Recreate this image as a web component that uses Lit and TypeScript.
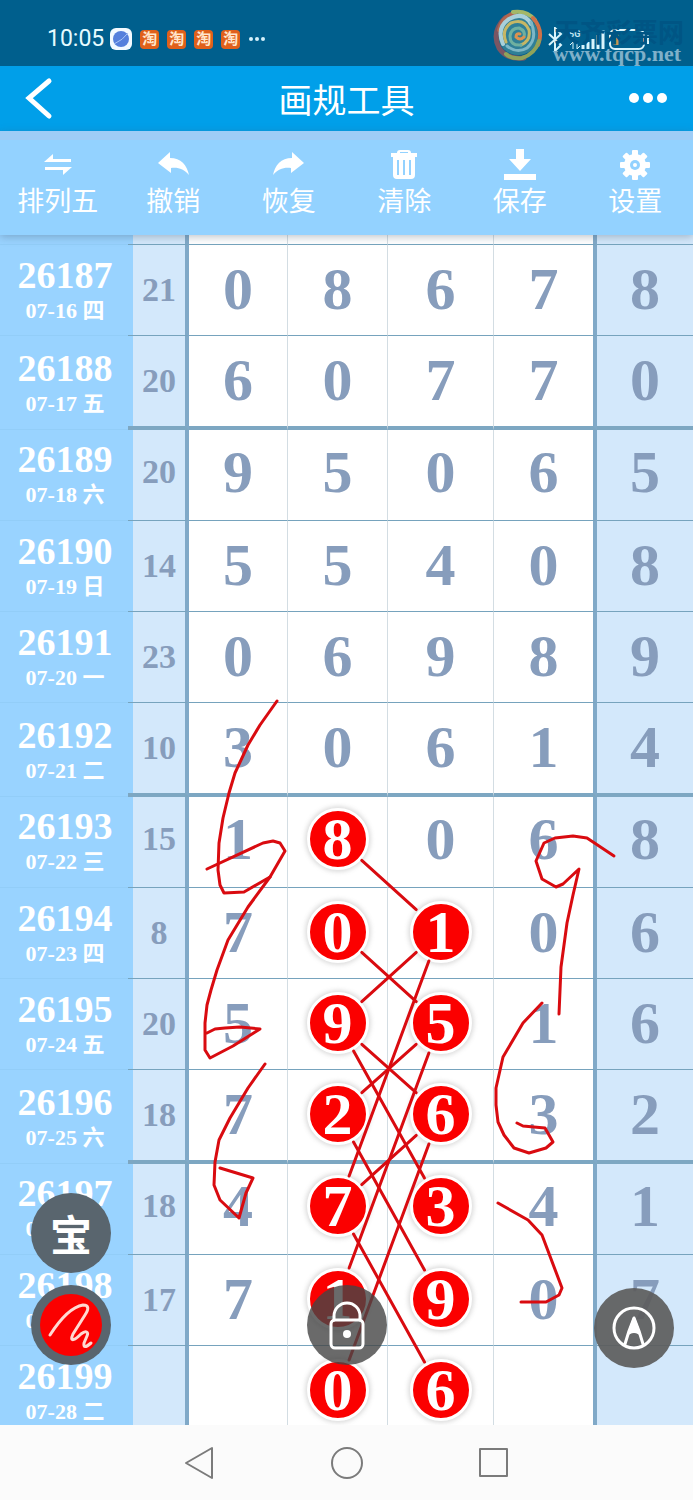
import { html, svg, css, LitElement } from "lit";
import { customElement, property, state } from "lit/decorators.js";
import { classMap } from "lit/directives/class-map.js";

interface Draw {
  issue: string;
  date: string;
  sum: string;
  digits: string[];
  marked?: number[];
  weekEnd?: boolean;
}

const DRAWS: Draw[] = [
  { issue: "26187", date: "07-16 四", sum: "21", digits: ["0", "8", "6", "7", "8"] },
  { issue: "26188", date: "07-17 五", sum: "20", digits: ["6", "0", "7", "7", "0"], weekEnd: true },
  { issue: "26189", date: "07-18 六", sum: "20", digits: ["9", "5", "0", "6", "5"] },
  { issue: "26190", date: "07-19 日", sum: "14", digits: ["5", "5", "4", "0", "8"] },
  { issue: "26191", date: "07-20 一", sum: "23", digits: ["0", "6", "9", "8", "9"] },
  { issue: "26192", date: "07-21 二", sum: "10", digits: ["3", "0", "6", "1", "4"], weekEnd: true },
  { issue: "26193", date: "07-22 三", sum: "15", digits: ["1", "8", "0", "6", "8"], marked: [1] },
  { issue: "26194", date: "07-23 四", sum: "8", digits: ["7", "0", "1", "0", "6"], marked: [1, 2] },
  { issue: "26195", date: "07-24 五", sum: "20", digits: ["5", "9", "5", "1", "6"], marked: [1, 2] },
  { issue: "26196", date: "07-25 六", sum: "18", digits: ["7", "2", "6", "3", "2"], marked: [1, 2], weekEnd: true },
  { issue: "26197", date: "07-26 日", sum: "18", digits: ["4", "7", "3", "4", "1"], marked: [1, 2] },
  { issue: "26198", date: "07-27 一", sum: "17", digits: ["7", "1", "9", "0", "7"], marked: [1, 2] },
  { issue: "26199", date: "07-28 二", sum: "", digits: ["", "0", "6", "", ""], marked: [1, 2] },
];

// Centres of the marked balls: [x, y] pairs joined by the ruler tool
const LINKS = [
  [338, 839, 440, 931],
  [338, 931, 440, 1023],
  [440, 931, 338, 1023],
  [338, 1023, 440, 1114],
  [440, 1023, 338, 1114],
  [338, 1023, 440, 1206],
  [338, 1114, 440, 1298],
  [440, 1114, 338, 1206],
  [338, 1206, 440, 1390],
  [440, 931, 338, 1206],
  [440, 1023, 338, 1298],
  [440, 1114, 338, 1390],
];

const STROKES = [
  "277,701 260,725 248,745 235,773 229,793 223,818 219,843 218,870 220,885 224,893 244,892 270,877",
  "207,869 263,843 273,841 280,843 285,851 270,877 248,907 228,940 217,970 211,990 207,1005 205,1023 205,1050 210,1058 233,1046 260,1029 240,1027 225,1028 215,1029 207,1033",
  "265,1064 248,1088 230,1118 219,1140 215,1162 214,1185 220,1200 239,1218 246,1193 253,1178 220,1168",
  "614,856 587,838 573,836 555,838 544,843 536,861 542,879 556,887 563,884 579,869 573,895 567,923 561,967 559,1014",
  "542,1003 523,1023 503,1057 496,1088 496,1105 498,1122 504,1135 514,1148 529,1153 546,1148 553,1142 545,1128 523,1126 517,1123",
  "498,1203 528,1220 542,1235 562,1288 559,1295 546,1302 521,1302",
];

const BALL_RADIUS = 32;

const icons = {
  swap: svg`<path d="M12 13 21 5v5h18v3zM40 18 31 26v-5H13v-3z" />`,
  undo: svg`<path d="M11 14 23 3v6c11 0 17 7 19 17-5-6-11-8-18-7v5z" />`,
  redo: svg`<path d="M41 14 29 3v6c-11 0-17 7-19 17 5-6 11-8 18-7v5z" />`,
  trash: svg`
    <path fill-rule="evenodd" d="M19 4q0-3 3-3h8q3 0 3 3h6v4H13V4zm3 0h8V3h-8zM15 8h22v18q0 4-4 4H19q-4 0-4-4zm4 3v15h2V11zm6 0v15h2V11zm6 0v15h2V11z" />
  `,
  save: svg`<path d="M22 0h8v10h7L26 22 15 10h7zM10 25h32v6H10z" />`,
  gear: svg`
    <g transform="translate(26 16)">
      ${[0, 45, 90, 135].map(
        (a) => svg`<rect x="-3" y="-15" width="6" height="30" rx="1" transform="rotate(${a})" />`
      )}
      <circle r="11" />
      <circle class="hole" r="5" />
      <circle r="2" />
    </g>
  `,
};

@customElement("status-bar")
export class StatusBar extends LitElement {
  static styles = css`
    :host {
      display: flex;
      align-items: center;
      justify-content: space-between;
      height: 66px;
      padding: 0 8px 0 47px;
      box-sizing: border-box;
      background: #005f8d;
      color: #e6fbff;
      font-family: Roboto, "Noto Sans CJK SC", sans-serif;
    }

    .left {
      display: flex;
      align-items: center;
      gap: 8px;
      padding-top: 12px;
    }

    .time {
      font-size: 23px;
      line-height: 28px;
    }

    .browser {
      margin-left: -2px;
    }

    .tao {
      width: 19px;
      height: 19px;
      border-radius: 4px;
      background: #e0601b;
      color: #ffe6cc;
      font-size: 15px;
      line-height: 19px;
      font-weight: 700;
      text-align: center;
    }

    .right {
      position: relative;
      display: flex;
      align-items: center;
      width: 192px;
      height: 66px;
    }

    .swirl {
      flex: none;
      width: 50px;
      height: 54px;
      margin-top: 4px;
    }

    .signals {
      flex: none;
      margin: 14px 0 0 4px;
    }

    /* site mark printed over the system icons */
    .mark {
      position: absolute;
      top: 13px;
      right: 1px;
      color: #005584;
      font-size: 26px;
      line-height: 40px;
      font-weight: 700;
    }

    .site {
      position: absolute;
      right: 4px;
      bottom: 0;
      color: #7fb0c9;
      font-family: "Liberation Serif", serif;
      font-size: 22px;
      line-height: 24px;
      font-weight: 700;
    }
  `;

  render() {
    return html`
      <div class="left">
        <span class="time">10:05</span>
        <svg class="browser" width="22" height="22" viewBox="0 0 22 22">
          <rect width="22" height="22" rx="6" fill="#f3faff" />
          <circle cx="11" cy="11" r="8" fill="#5580dc" />
          <path d="M4 16Q13 12 18 5" fill="none" stroke="#a9c6f7" stroke-width="1" />
        </svg>
        ${[0, 1, 2, 3].map(() => html`<span class="tao">淘</span>`)}
        <svg width="18" height="6" viewBox="0 0 18 6" fill="#d5f1fb">
          <circle cx="3" cy="3" r="2" />
          <circle cx="9" cy="3" r="2" />
          <circle cx="15" cy="3" r="2" />
        </svg>
      </div>
      <div class="right">
        <span class="mark">天齐彩票网</span>
        <svg class="swirl" viewBox="0 0 50 54" fill="none" stroke-linecap="round">
          <circle cx="25" cy="27" r="20" fill="#2f7f97" />
          <path d="M12 10Q-2 24 6 40 14 52 31 50" stroke="#7b5663" stroke-width="5" />
          <path d="M6 22Q9 8 22 5" stroke="#b0654f" stroke-width="4" />
          <path d="M20 4Q34 2 42 12" stroke="#a3b869" stroke-width="4" />
          <path d="M40 10Q51 22 45 37" stroke="#cf7148" stroke-width="4" />
          <path d="M46 33Q42 46 29 50 18 51 13 46" stroke="#8fa35a" stroke-width="4" />
          <path d="M10 36Q3 20 16 11 31 3 38 16" stroke="#a9d0da" stroke-width="4" />
          <path d="M38 14Q45 31 34 40 24 46 14 38" stroke="#7db7c6" stroke-width="3" />
          <path d="M13 34Q8 22 18 15 31 10 36 22 38 33 28 37" stroke="#c6b765" stroke-width="3" />
          <path d="M28 37Q17 38 17 28 18 20 26 20 33 23 31 29" stroke="#6fb0a0" stroke-width="3" />
          <path d="M31 29Q27 33 23 29 23 25 27 26" stroke="#dc9250" stroke-width="3" />
        </svg>
        <svg class="signals" width="104" height="26" viewBox="0 0 104 26" fill="none" stroke="#d9f4fc">
          <path d="m2 7 12 11-6 6V1l6 6L2 18" stroke-width="2" />
          <text x="22" y="10" font-family="Roboto" font-size="9" font-weight="700" fill="#c5e6f2" stroke="none">5G</text>
          <path d="M26 22v-7l-3 3M30 14v8l3-3" stroke-width="1" />
          <path d="M36 22v-4M41 22v-7M46 22V12M51 22V8M56 22V3" stroke-width="3" />
          <rect x="63" y="3" width="34" height="19" rx="5" stroke-width="2" />
          <path d="M101 8v9" stroke-width="2" />
          <path d="M69 7v11" stroke="#c99556" stroke-width="5" />
        </svg>
        <span class="site">www.tqcp.net</span>
      </div>
    `;
  }
}

@customElement("tool-button")
export class ToolButton extends LitElement {
  @property({ type: String }) label = "";
  @property({ type: String }) icon: keyof typeof icons = "swap";

  static styles = css`
    :host {
      display: block;
      flex: 1;
    }

    button {
      display: flex;
      flex-direction: column;
      align-items: center;
      width: 100%;
      padding: 0;
      border: none;
      background: none;
      color: #fff;
      font-family: "Noto Sans CJK SC", sans-serif;
      font-size: 27px;
      line-height: 38px;
      cursor: pointer;
    }

    svg {
      fill: #fff;
      overflow: visible;
    }

    .hole {
      fill: #93d2ff;
    }
  `;

  render() {
    return html`
      <button type="button">
        <svg width="52" height="32" viewBox="0 0 52 32">${icons[this.icon]}</svg>
        <span>${this.label}</span>
      </button>
    `;
  }
}

@customElement("trend-table")
export class TrendTable extends LitElement {
  @property({ attribute: false }) draws: Draw[] = [];

  static styles = css`
    :host {
      display: block;
      position: relative;
    }

    table {
      width: 100%;
      table-layout: fixed;
      border-collapse: separate;
      border-spacing: 0;
      background: #fff;
      font-family: "Liberation Serif", "Noto Sans CJK SC", serif;
      font-weight: 700;
    }

    .col-issue { width: 128px; }
    .col-sum { width: 61px; }
    .col-1 { width: 99px; }
    .col-2 { width: 100px; }
    .col-3 { width: 106px; }
    .col-4 { width: 103px; }
    .col-5 { width: 96px; }

    th,
    td {
      box-sizing: border-box;
      height: 91px;
      padding: 0;
      text-align: center;
      vertical-align: middle;
    }

    td {
      border-bottom: 1px solid #76a3bd;
      border-right: 1px solid #d3dde3;
      padding-bottom: 3px;
      color: #879dbc;
      font-size: 60px;
      line-height: 64px;
    }

    th {
      background: #99d3ff;
      border-bottom: 1px solid #92cdf8;
      color: #fff;
      padding: 4px 0 0 2px;
    }

    .week-end th {
      height: 94px;
    }

    .week-end td {
      height: 94px;
      border-bottom: 4px solid #7da7c2;
    }

    .week-end + tr td {
      padding-bottom: 6px;
    }

    .week-end + tr th {
      padding-top: 2px;
    }

    .peek th,
    .peek td {
      height: 10px;
      padding: 0;
    }

    td.sum {
      padding-left: 5px;
      padding-bottom: 1px;
      border-right: 4px solid #80a9c8;
      background: linear-gradient(to right, #99d3ff 5px, #d3e8fb 5px);
      font-size: 34px;
      line-height: 40px;
    }

    td.fourth {
      border-right: 4px solid #80a9c8;
    }

    td.last {
      border-right: none;
      background: #d3e8fb;
    }

    .issue {
      display: block;
      font-size: 38px;
      line-height: 38px;
    }

    .date {
      display: block;
      font-size: 22px;
      line-height: 34px;
    }

    .ball {
      display: block;
      width: 56px;
      height: 56px;
      margin: 0 auto;
      border: 3px solid #fff;
      border-radius: 50%;
      background: #fb0000;
      box-shadow: 0 0 4px 2px rgba(120, 120, 120, 0.25);
      color: #fff;
      line-height: 56px;
    }

    /* pen layer over the table */
    .ink {
      position: absolute;
      inset: 0;
      width: 100%;
      height: 100%;
      fill: none;
      stroke: #d90b10;
      stroke-width: 3;
      stroke-linecap: round;
      stroke-linejoin: round;
      pointer-events: none;
    }
  `;

  private renderLink([x1, y1, x2, y2]: number[]) {
    const length = Math.hypot(x2 - x1, y2 - y1);
    const dx = ((x2 - x1) / length) * BALL_RADIUS;
    const dy = ((y2 - y1) / length) * BALL_RADIUS;
    return svg`<line x1=${x1 + dx} y1=${y1 + dy} x2=${x2 - dx} y2=${y2 - dy} />`;
  }

  private renderDigit(draw: Draw, digit: string, i: number) {
    const cell = classMap({ fourth: i === 3, last: i === 4 });
    return html`
      <td class=${cell}>
        ${draw.marked?.includes(i)
          ? html`<span class="ball">${digit}</span>`
          : digit}
      </td>
    `;
  }

  render() {
    return html`
      <table>
        <colgroup>
          <col class="col-issue" />
          <col class="col-sum" />
          <col class="col-1" />
          <col class="col-2" />
          <col class="col-3" />
          <col class="col-4" />
          <col class="col-5" />
        </colgroup>
        <tbody>
          <tr class="peek">
            <th></th>
            <td class="sum"></td>
            <td></td>
            <td></td>
            <td></td>
            <td class="fourth"></td>
            <td class="last"></td>
          </tr>
          ${this.draws.map(
            (draw) => html`
              <tr class=${classMap({ "week-end": !!draw.weekEnd })}>
                <th scope="row">
                  <span class="issue">${draw.issue}</span>
                  <span class="date">${draw.date}</span>
                </th>
                <td class="sum">${draw.sum}</td>
                ${draw.digits.map((digit, i) => this.renderDigit(draw, digit, i))}
              </tr>
            `
          )}
        </tbody>
      </table>
      <svg class="ink" viewBox="0 235 693 1202" preserveAspectRatio="none">
        ${LINKS.map((link) => this.renderLink(link))}
        ${STROKES.map((points) => svg`<polyline points=${points} />`)}
      </svg>
    `;
  }
}

@customElement("app-root")
export class AppRoot extends LitElement {
  @state() private draws = DRAWS;

  static styles = css`
    :host {
      display: flex;
      flex-direction: column;
      height: 100vh;
      overflow: hidden;
      background: #fff;
      font-family: "Noto Sans CJK SC", sans-serif;
    }

    button {
      padding: 0;
      border: none;
      background: none;
      color: #fff;
      font: inherit;
      cursor: pointer;
    }

    svg {
      display: block;
    }

    status-bar {
      flex: none;
    }

    .header {
      flex: none;
      display: grid;
      grid-template-columns: 1fr auto 1fr;
      align-items: center;
      height: 65px;
      padding: 0 25px;
      background: #009fe9;
      color: #fff;
    }

    .header h1 {
      margin: 0;
      font-size: 34px;
      line-height: 48px;
      font-weight: 400;
    }

    .more {
      justify-self: end;
    }

    .toolbar {
      flex: none;
      position: relative;
      z-index: 1;
      display: flex;
      height: 104px;
      padding-top: 18px;
      box-sizing: border-box;
      background: linear-gradient(#9dccf6 9px, #93d2ff 9px);
      box-shadow: 0 2px 8px rgba(70, 90, 110, 0.35);
    }

    .board {
      flex: 1;
      position: relative;
      min-height: 0;
      overflow: hidden;
    }

    .float {
      display: grid;
      place-items: center;
      width: 80px;
      height: 80px;
      border-radius: 50%;
      background: rgba(69, 69, 69, 0.8);
      font-size: 42px;
      line-height: 48px;
      font-weight: 700;
    }

    .float svg {
      fill: none;
      stroke: #fff;
      stroke-width: 3;
      stroke-linecap: round;
      stroke-linejoin: round;
    }

    .stack {
      position: absolute;
      left: 31px;
      bottom: 60px;
      display: flex;
      flex-direction: column;
      gap: 12px;
    }

    .stack .float {
      background: #59656e;
    }

    .lock {
      position: absolute;
      left: calc(50% - 40px);
      bottom: 60px;
    }

    .compass {
      position: absolute;
      right: 19px;
      bottom: 57px;
      background: rgba(92, 92, 92, 0.92);
    }

    .nav {
      flex: none;
      display: flex;
      align-items: center;
      justify-content: center;
      gap: 115px;
      height: 75px;
      background: #fbfbfb;
    }

    .nav svg {
      fill: none;
      stroke: #7b7b7b;
      stroke-width: 2;
      stroke-linejoin: round;
    }
  `;

  render() {
    return html`
      <status-bar></status-bar>
      <header class="header">
        <button type="button" aria-label="返回">
          <svg width="28" height="44" viewBox="0 0 28 44" fill="none" stroke="#fff" stroke-width="5" stroke-linecap="round">
            <path d="M24 4 4 21 24 39" />
          </svg>
        </button>
        <h1>画规工具</h1>
        <button type="button" class="more" aria-label="更多">
          <svg width="40" height="14" viewBox="0 0 40 14" fill="#fff">
            <circle cx="6" cy="6" r="5" />
            <circle cx="20" cy="6" r="5" />
            <circle cx="34" cy="6" r="5" />
          </svg>
        </button>
      </header>
      <nav class="toolbar">
        <tool-button icon="swap" label="排列五"></tool-button>
        <tool-button icon="undo" label="撤销"></tool-button>
        <tool-button icon="redo" label="恢复"></tool-button>
        <tool-button icon="trash" label="清除"></tool-button>
        <tool-button icon="save" label="保存"></tool-button>
        <tool-button icon="gear" label="设置"></tool-button>
      </nav>
      <main class="board">
        <trend-table .draws=${this.draws}></trend-table>
        <div class="stack">
          <button type="button" class="float">宝</button>
          <button type="button" class="float" aria-label="画笔">
            <svg width="64" height="64" viewBox="0 0 64 64">
              <circle cx="32" cy="32" r="31" fill="#fb0000" stroke="none" />
              <path d="M11 42C20 28 32 14 44 12 50 12 50 16 46 22L34 41C30 50 36 47 42 41 47 37 50 39 48 43L45 50Q44 57 52 50" stroke="#ffd9d2" />
            </svg>
          </button>
        </div>
        <button type="button" class="float lock" aria-label="锁定">
          <svg width="36" height="50" viewBox="0 0 36 50">
            <rect x="2" y="20" width="32" height="28" rx="4" />
            <path d="M5 20v-4a13 13 0 0 1 26 0v4" />
            <circle cx="18" cy="34" r="4" fill="#fff" stroke="none" />
          </svg>
        </button>
        <button type="button" class="float compass" aria-label="圆规">
          <svg width="44" height="44" viewBox="0 0 44 44">
            <circle cx="22" cy="22" r="20" />
            <path d="M13 38 17 25 22 12 27 25 31 38" />
            <path d="M22 13 17 27Q22 24 27 27z" fill="#fff" />
          </svg>
        </button>
      </main>
      <footer class="nav">
        <button type="button" aria-label="后退">
          <svg width="32" height="34" viewBox="0 0 32 34"><path d="M2 17 28 2v30z" /></svg>
        </button>
        <button type="button" aria-label="主页">
          <svg width="32" height="34" viewBox="0 0 32 34"><circle cx="16" cy="17" r="15" /></svg>
        </button>
        <button type="button" aria-label="最近任务">
          <svg width="32" height="34" viewBox="0 0 32 34"><rect x="2" y="3" width="27" height="27" /></svg>
        </button>
      </footer>
    `;
  }
}
